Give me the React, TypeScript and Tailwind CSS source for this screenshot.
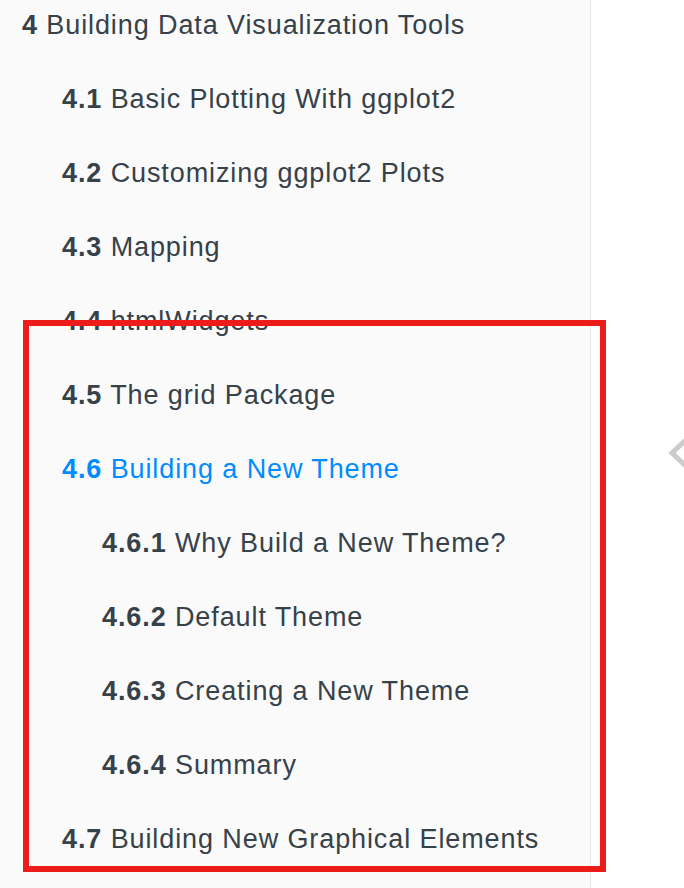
const items = [
  { num: "4", title: "Building Data Visualization Tools", level: 0 },
  { num: "4.1", title: "Basic Plotting With ggplot2", level: 1 },
  { num: "4.2", title: "Customizing ggplot2 Plots", level: 1 },
  { num: "4.3", title: "Mapping", level: 1 },
  { num: "4.4", title: "htmlWidgets", level: 1 },
  { num: "4.5", title: "The grid Package", level: 1 },
  { num: "4.6", title: "Building a New Theme", level: 1, active: true },
  { num: "4.6.1", title: "Why Build a New Theme?", level: 2 },
  { num: "4.6.2", title: "Default Theme", level: 2 },
  { num: "4.6.3", title: "Creating a New Theme", level: 2 },
  { num: "4.6.4", title: "Summary", level: 2 },
  { num: "4.7", title: "Building New Graphical Elements", level: 1 },
];

const indent = ["pl-[22px]", "pl-[62px]", "pl-[102px]"];

export default function App() {
  return (
    <div className="relative flex h-[888px] w-[684px] overflow-hidden bg-white font-['Liberation_Sans',Arial,sans-serif]">
      <nav className="h-full w-[591px] shrink-0 border-r border-[#e6e6e6] bg-[#fafafa]">
        <ul className="flex flex-col gap-[48px] pt-[12px]">
          {items.map((item) => (
            <li
              key={item.num}
              className={`${indent[item.level]} whitespace-nowrap text-[27px] leading-[26px] tracking-[0.9px] ${
                item.active ? "text-[#008cff]" : "text-[#364149]"
              }`}
            >
              <b className="font-bold">{item.num}</b> {item.title}
            </li>
          ))}
        </ul>
      </nav>
      <div className="flex grow items-center">
        <ChevronLeft />
      </div>
      <div className="pointer-events-none absolute left-[23px] top-[320px] h-[552px] w-[583px] border-[6px] border-[#ee1b1b]" />
    </div>
  );
}

function ChevronLeft() {
  return (
    <svg
      className="absolute left-[666px] top-[434px] h-[40px] w-[24px]"
      viewBox="0 0 24 40"
      fill="none"
    >
      <polyline
        points="22,4 6,19 22,34"
        stroke="#cccccc"
        strokeWidth="5"
        strokeLinecap="square"
      />
    </svg>
  );
}
